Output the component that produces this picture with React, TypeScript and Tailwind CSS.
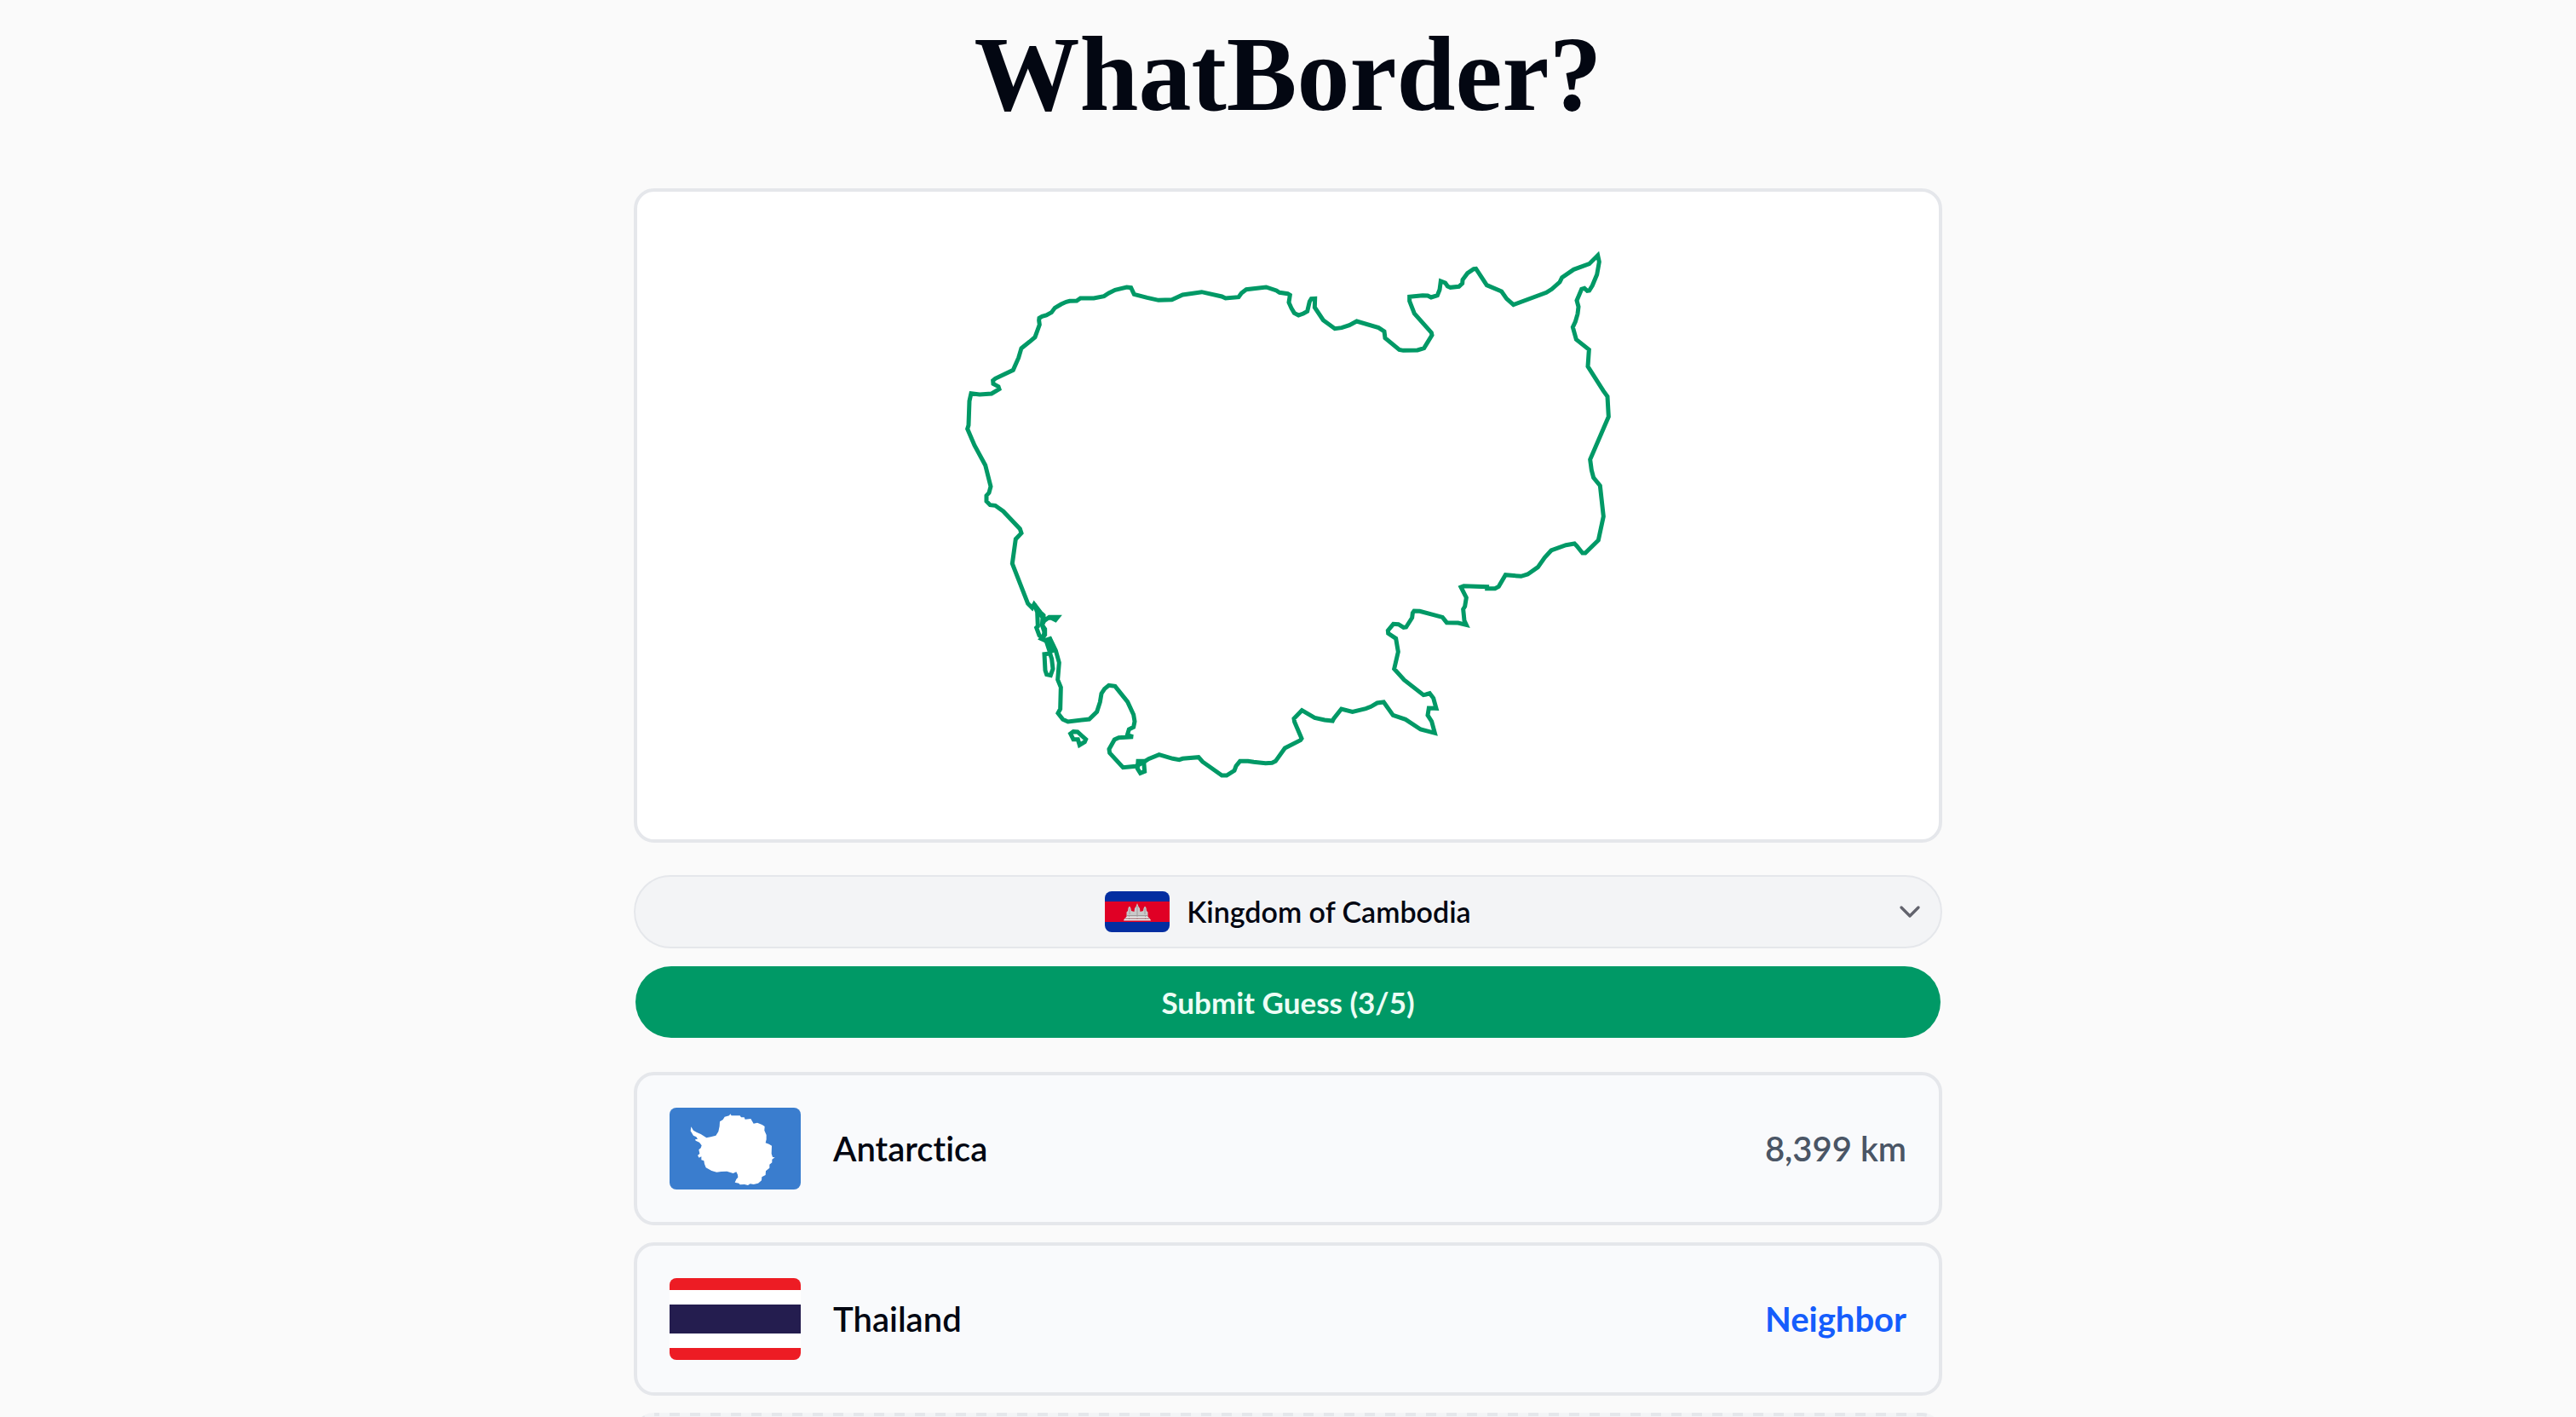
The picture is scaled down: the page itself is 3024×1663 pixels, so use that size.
import { useState } from 'react'
import { ChevronDown } from 'lucide-react'

const countries = ['Kingdom of Cambodia', 'Antarctica', 'Thailand']

const mainland =
  'M120 545 150 549 192 546 219 530 216 521 198 511 197 500 205 493 268 463 287 420 297 386 325 364 345 347 361 303 359 288 360 280 370 274 385 270 403 260 415 244 437 231 455 223 467 220 492 219 505 210 552 210 588 203 605 192 627 181 668 171 683 173 694 196 740 208 780 217 827 215 865 198 932 188 1003 204 1016 210 1062 206 1072 192 1089 179 1159 171 1195 183 1206 190 1235 194 1243 199 1239 225 1248 245 1258 262 1273 270 1290 264 1304 256 1312 222 1318 212 1331 211 1330 242 1360 287 1401 317 1425 314 1452 305 1478 291 1555 314 1575 327 1578 350 1628 391 1642 394 1692 393 1715 386 1743 340 1741 331 1681 264 1664 220 1664 205 1710 200 1728 201 1740 207 1762 200 1770 180 1774 150 1790 156 1798 168 1808 172 1838 169 1850 158 1851 145 1868 122 1890 107 1898 106 1936 164 1988 186 2006 212 2030 233 2146 190 2165 178 2193 153 2201 137 2242 109 2297 89 2327 59 2332 82 2324 127 2308 165 2297 183 2290 184 2280 175 2270 178 2253 218 2259 240 2256 265 2248 293 2239 312 2251 355 2296 391 2292 450 2346 535 2361 556 2365 627 2300 778 2305 815 2312 842 2335 870 2347 978 2329 1062 2283 1107 2273 1107 2253 1082 2245 1074 2215 1079 2163 1098 2140 1123 2116 1157 2080 1182 2057 1189 2002 1184 1978 1225 1965 1232 1937 1232 1937 1226 1855 1223 1845 1227 1864 1264 1859 1295 1853 1305 1857 1345 1864 1360 1835 1353 1795 1352 1780 1333 1700 1312 1680 1311 1675 1318 1673 1335 1652 1368 1643 1369 1625 1358 1607 1357 1588 1380 1589 1390 1616 1408 1624 1455 1610 1515 1645 1554 1713 1607 1722 1605 1735 1601 1748 1618 1758 1654 1732 1653 1728 1678 1742 1700 1753 1741 1703 1728 1650 1693 1606 1678 1573 1632 1550 1635 1528 1648 1510 1655 1463 1666 1424 1656 1397 1690 1393 1698 1365 1695 1330 1687 1285 1661 1257 1690 1259 1702 1284 1760 1280 1766 1225 1794 1192 1840 1180 1846 1157 1847 1115 1843 1095 1840 1067 1840 1053 1857 1047 1873 1020 1890 1003 1890 935 1842 921 1826 865 1831 853 1835 830 1831 782 1817 745 1832 725 1845 700 1858 655 1862 608 1811 606 1798 625 1764 640 1757 690 1754 670 1748 676 1728 692 1720 696 1700 692 1676 671 1631 627 1576 605 1573 590 1585 579 1602 574 1632 563 1666 536 1692 461 1701 443 1693 426 1671 434 1656 436 1580 425 1553 430 1493 418 1450 398 1409 380 1415 367 1409 380 1395 380 1375 370 1360 378 1345 395 1333 425 1333 417 1343 400 1334 375 1342 375 1326 365 1317 342 1287 335 1300 320 1285 265 1144 277 1058 297 1037 292 1022 233 960 205 940 187 938 174 925 174 905 183 895 189 873 170 798 132 728 107 670 111 657 114 572Z'

const islands = [
  'M342 1288 353 1315 355 1365 350 1370 360 1397 374 1408 378 1385 370 1360 372 1335Z',
  'M384 1415 397 1455 410 1450 398 1412Z',
  'M378 1463 398 1461 404 1480 408 1515 400 1538 386 1535 381 1520Z',
  'M470 1743 480 1736 495 1737 524 1763 520 1772 502 1783 496 1763 480 1763Z',
  'M708 1840 728 1840 731 1876 716 1882 706 1866Z',
]

function BorderMap() {
  return (
    <svg viewBox="0 0 4584 2280" className="block h-full w-full" role="img" aria-label="Country outline">
      <g transform="translate(1056 165)" fill="none" stroke="#009966" strokeWidth="15">
        <path d={mainland} />
        {islands.map((d) => (
          <path key={d} d={d} />
        ))}
      </g>
    </svg>
  )
}

function CambodiaFlag() {
  return (
    <svg viewBox="0 0 76 48" className="h-12 w-[76px] shrink-0 rounded-lg" aria-hidden="true">
      <rect width="76" height="48" fill="#032ea1" />
      <rect y="12" width="76" height="24" fill="#e00025" />
      <path
        d="M22 34.500 24 31 25.500 30 25.500 24.500 27 23 27.500 19.500 29 17.500 30.500 20 31 23 34.500 24 35 20 36.500 18 38 14 39.500 18 41 20 41.500 24 45 23 45.500 20 47 17.500 48.500 19.500 49 23 50.500 24.500 50.500 30 52 31 54 34.500Z"
        fill="#c9c9c9"
      />
      <path d="M26 28.500H50M29 20V27M47 20V27M38 17V34M28.500 29V34M47.500 29V34" stroke="#a09a9b" strokeWidth="1" />
      <path d="M25 30.500H51M22.500 33.500H53.500" stroke="#f2f2f2" strokeWidth="1" />
      <path d="M24 32H52" stroke="#b5787f" strokeWidth="1" />
    </svg>
  )
}

function AntarcticaFlag() {
  return (
    <svg viewBox="0 0 462 288" className="h-24 w-[154px] shrink-0 rounded-lg" aria-hidden="true">
      <rect width="462" height="288" fill="#3a7dce" />
      <path
        d="M76 67 84 80 96 87 110 93 130 106 145 103 163 98 172 84 176 65 177 49 188 42 194 32 210 28 214 22 218 28 248 28 252 34 263 34 266 41 286 39 296 56 309 53 326 60 335 66 334 80 341 96 341 112 338 124 350 128 360 134 359 162 363 174 371 175 361 182 361 193 352 200 352 212 339 223 338 237 325 244 324 256 312 266 296 270 284 268 276 273 264 270 248 271 244 266 230 263 235 252 241 245 240 236 235 226 224 231 202 224 182 225 166 227 148 222 128 211 123 198 121 187 112 184 112 172 104 176 99 168 106 162 103 148 110 142 113 133 105 122 92 116 90 112 99 110 94 103 84 98 74 82Z"
        fill="#fff"
      />
    </svg>
  )
}

function ThailandFlag() {
  return (
    <svg viewBox="0 0 154 96" className="h-24 w-[154px] shrink-0 rounded-lg" aria-hidden="true">
      <rect width="154" height="96" fill="#ed1c24" />
      <rect y="14" width="154" height="68" fill="#fff" />
      <rect y="31" width="154" height="34" fill="#241d4f" />
    </svg>
  )
}

const guesses = [
  { name: 'Antarctica', flag: AntarcticaFlag, result: '8,399 km', resultClass: 'font-semibold text-gray-600' },
  { name: 'Thailand', flag: ThailandFlag, result: 'Neighbor', resultClass: 'font-bold text-blue-600' },
]

export default function App() {
  const [country, setCountry] = useState(countries[0])

  return (
    <div className="h-screen overflow-hidden bg-[#fafafa] font-[Lato,sans-serif] text-gray-950 [font-variant-ligatures:none]">
      <main className="mx-auto flex max-w-[1536px] flex-col">
        <h1 className="pt-4 text-center font-['Liberation_Serif',serif] text-[124px] leading-[144px] font-bold">
          WhatBorder?
        </h1>

        <div className="mt-[61px] aspect-[2/1] rounded-3xl border-4 border-gray-200 bg-white">
          <BorderMap />
        </div>

        <form className="mt-[38px] flex flex-col gap-[21px]" onSubmit={(e) => e.preventDefault()}>
          <div className="relative flex h-[86px] items-center justify-center gap-5 rounded-full border-2 border-gray-200 bg-gray-100">
            <CambodiaFlag />
            <select
              aria-label="Country"
              value={country}
              onChange={(e) => setCountry(e.target.value)}
              className="field-sizing-content appearance-none bg-transparent text-[34px] leading-[46px] font-semibold"
            >
              {countries.map((name) => (
                <option key={name}>{name}</option>
              ))}
            </select>
            <ChevronDown className="pointer-events-none absolute right-4 size-10 text-[#62636d]" strokeWidth={2} />
          </div>
          <button
            type="submit"
            className="mx-0.5 h-[84px] rounded-full bg-emerald-600 text-[35px] font-bold text-emerald-50"
          >
            Submit Guess (3/5)
          </button>
        </form>

        <ul className="mt-10 flex flex-col gap-5">
          {guesses.map(({ name, flag: Flag, result, resultClass }) => (
            <li
              key={name}
              className="flex h-[180px] items-center gap-[38px] rounded-3xl border-4 border-gray-200 bg-[#f9fafc] px-[38px]"
            >
              <Flag />
              <span className="flex-1 text-[40px] font-semibold">{name}</span>
              <span className={`text-[40px] ${resultClass}`}>{result}</span>
            </li>
          ))}
          {/* Slot for the next guess */}
          <li className="h-[180px] rounded-3xl bg-gray-100">
            <svg className="h-full w-full" aria-hidden="true">
              <rect
                x="2"
                y="2"
                rx="22"
                className="h-[calc(100%-4px)] w-[calc(100%-4px)] fill-none stroke-gray-200 stroke-4"
                strokeDasharray="12 12"
                strokeDashoffset="6"
              />
            </svg>
          </li>
        </ul>
      </main>
    </div>
  )
}
